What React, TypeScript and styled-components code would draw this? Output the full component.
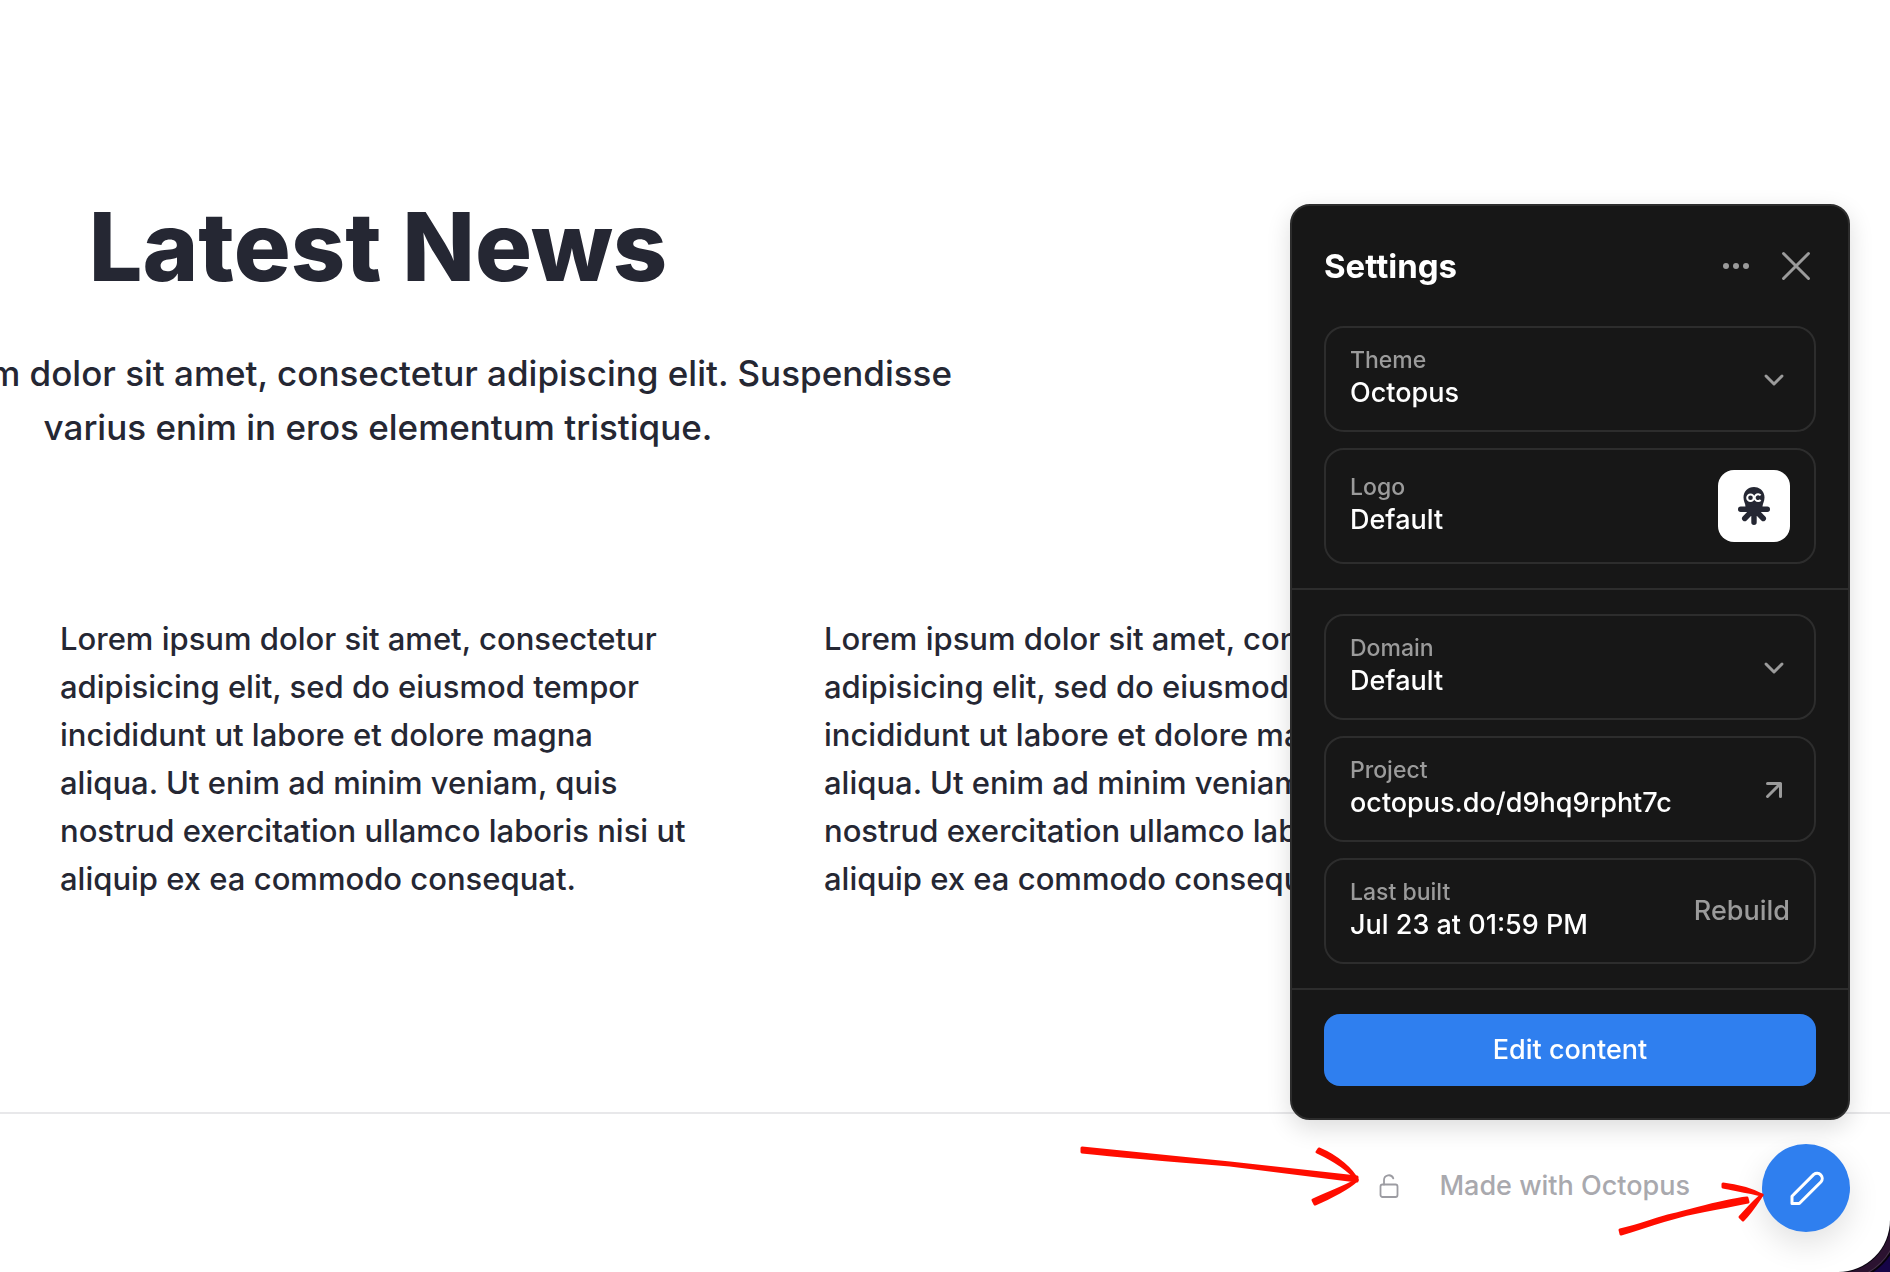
import React from "react";
import styled, { createGlobalStyle } from "styled-components";

const GlobalStyle = createGlobalStyle`
  *, *::before, *::after { box-sizing: border-box; }
  html, body, #root { height: 100%; }
  body { margin: 0; background: #160447; overflow: hidden; }
  body, button, a { font-family: Inter, "Liberation Sans", sans-serif; font-weight: 500; }
  h1, h2, p { margin: 0; }
`;

const Page = styled.div`
  position: relative;
  min-height: 100%;
  display: flex;
  flex-direction: column;
  overflow: hidden;
  background: #fff;
  color: #252733;
  border-bottom-right-radius: 52px;
  box-shadow: 0 0 0 1px #0a0510, 0 0 0 8px #2b1230, 0 0 0 9px #463349, 0 0 0 11px #07020c;
`;

const News = styled.main`
  display: grid;
  grid-template-columns: 636px 636px;
  column-gap: 128px;
  row-gap: 161px;
  padding: 191px 0 209px 60px;
`;

const Intro = styled.header`
  grid-column: 1;
  justify-self: center;
  display: flex;
  flex-direction: column;
  align-items: center;
  gap: 43px;
  text-align: center;
  white-space: nowrap;
`;

const Title = styled.h1`
  font-size: 95px;
  line-height: 112px;
  font-weight: 800;
`;

const Lead = styled.p`
  font-size: 35px;
  line-height: 54px;
`;

const Excerpt = styled.p`
  grid-row: 2;
  font-size: 31px;
  line-height: 48px;
`;

const Footer = styled.footer`
  flex: 1;
  display: flex;
  justify-content: flex-end;
  align-items: flex-start;
  gap: 40px;
  padding: 48px 200px 0 0;
  border-top: 2px solid #e8e8ea;
`;

const FooterLink = styled.a`
  display: flex;
  align-items: center;
  height: 48px;
  color: #a9a9ae;
  font-size: 27px;
  line-height: 48px;
  text-decoration: none;
`;

const Widget = styled.div`
  position: fixed;
  right: 40px;
  bottom: 40px;
  display: flex;
  flex-direction: column;
  align-items: flex-end;
  gap: 24px;
`;

const Panel = styled.section`
  width: 560px;
  border: 2px solid #2d2d2d;
  border-radius: 20px;
  background: #171717;
  box-shadow: 0 8px 24px rgba(0, 0, 0, 0.14);
`;

const PanelHeader = styled.header`
  display: flex;
  align-items: center;
  gap: 20px;
  height: 120px;
  padding: 0 32px;
`;

const PanelTitle = styled.h2`
  flex: 1;
  color: #fff;
  font-size: 33px;
  line-height: 40px;
  font-weight: 700;
`;

const IconButton = styled.button`
  display: grid;
  place-items: center;
  width: 40px;
  height: 40px;
  padding: 0;
  border: 0;
  background: none;
  color: #9b9b9b;
`;

const Group = styled.div<{ $first?: boolean }>`
  display: flex;
  flex-direction: column;
  gap: 16px;
  padding: ${(p) => (p.$first ? "0 32px 24px" : "24px 32px")};
  border-bottom: 2px solid #2d2d2d;
`;

const Card = styled.div<{ $tall?: boolean }>`
  display: flex;
  align-items: center;
  justify-content: space-between;
  width: 100%;
  height: ${(p) => (p.$tall ? 116 : 106)}px;
  padding: 0 24px;
  border: 2px solid #2d2d2d;
  border-radius: 20px;
  background: none;
  color: #9b9b9b;
  text-align: left;
  text-decoration: none;
`;

const Field = styled.span`
  display: flex;
  flex-direction: column;
`;

const Label = styled.span`
  color: #9b9b9b;
  font-size: 23px;
  line-height: 28px;
`;

const Value = styled.span`
  color: #fff;
  font-size: 27px;
  line-height: 38px;
`;

const LogoTile = styled.span`
  display: grid;
  place-items: center;
  width: 72px;
  height: 72px;
  border-radius: 16px;
  background: #fff;
`;

const TextButton = styled.button`
  padding: 0;
  border: 0;
  background: none;
  color: #9b9b9b;
  font-size: 27px;
  line-height: 38px;
`;

const Actions = styled.div`
  padding: 24px 32px 32px;
`;

const PrimaryButton = styled.button`
  width: 100%;
  height: 72px;
  border: 0;
  border-radius: 16px;
  background: #2f7fef;
  color: #fff;
  font-size: 27px;
  line-height: 38px;
`;

const EditFab = styled.button`
  display: grid;
  place-items: center;
  width: 88px;
  height: 88px;
  padding: 0;
  border: 0;
  border-radius: 50%;
  background: #2f7fef;
  color: #fff;
  box-shadow: 0 12px 32px rgba(0, 0, 0, 0.12);
`;

const Marks = styled.svg`
  position: fixed;
  right: 120px;
  bottom: 32px;
  width: 700px;
  height: 100px;
  pointer-events: none;
  overflow: visible;
`;

const Chevron = () => (
  <svg width="32" height="32" viewBox="0 0 32 32" fill="none" stroke="currentColor" strokeWidth="3" strokeLinecap="round" strokeLinejoin="round" aria-hidden="true">
    <path d="M8 13l8 8 8-8" />
  </svg>
);

const Outward = () => (
  <svg width="32" height="32" viewBox="0 0 32 32" fill="none" stroke="currentColor" strokeWidth="3" strokeLinecap="round" strokeLinejoin="round" aria-hidden="true">
    <path d="M9.500 10.500h13v13M22.500 10.500L9.500 23.500" />
  </svg>
);

const Dots = () => (
  <svg width="40" height="40" viewBox="0 0 40 40" fill="currentColor" aria-hidden="true">
    <circle cx="10" cy="20" r="3" />
    <circle cx="20" cy="20" r="3" />
    <circle cx="30" cy="20" r="3" />
  </svg>
);

const Close = () => (
  <svg width="40" height="40" viewBox="0 0 40 40" fill="none" stroke="currentColor" strokeWidth="3" strokeLinecap="round" aria-hidden="true">
    <path d="M7.500 7.500l25 25M32.500 7.500l-25 25" />
  </svg>
);

const Octopus = () => (
  <svg width="32" height="40" viewBox="0 0 32 40" fill="none" aria-hidden="true">
    <path d="M16 1C9.800 1 5.500 5.600 5.500 11.500c0 4 2 6 2 9.500l2 7h13l2-7c0-3.500 2-5.500 2-9.500C26.500 5.600 22.200 1 16 1z" fill="#252733" />
    <path d="M2.700 23.300h26.600M13 26l-6.300 6.500M19 26l6.300 6.500M16 24v12.300" stroke="#252733" strokeWidth="5.400" strokeLinecap="round" />
    <circle cx="12.500" cy="11.700" r="3.300" stroke="#fff" strokeWidth="2" />
    <path d="M22.600 9.400a3.400 3.400 0 1 0 0 4.600" stroke="#fff" strokeWidth="2" />
  </svg>
);

const Unlock = () => (
  <svg width="20" height="26" viewBox="0 0 20 26" fill="none" stroke="#9c9ca2" strokeWidth="1.800" strokeLinecap="round" strokeLinejoin="round" aria-hidden="true">
    <rect x="1.500" y="11.500" width="17" height="12.500" rx="2" />
    <path d="M5 11.500V7a4.800 4.800 0 0 1 9.300-1.600" />
  </svg>
);

const Pencil = () => (
  <svg width="40" height="40" viewBox="0 0 40 40" fill="none" stroke="currentColor" strokeWidth="3" strokeLinejoin="round" aria-hidden="true">
    <path d="M6 35.500v-7.300L27.800 6.400a5.200 5.200 0 0 1 7.300 7.300L13.300 35.500z" />
  </svg>
);

const excerpt =
  "Lorem ipsum dolor sit amet, consectetur adipisicing elit, sed do eiusmod tempor incididunt ut labore et dolore magna aliqua. Ut enim ad minim veniam, quis nostrud exercitation ullamco laboris nisi ut aliquip ex ea commodo consequat.";

type RowProps = { label: string; value: string };

const Info = ({ label, value }: RowProps) => (
  <Field>
    <Label>{label}</Label>
    <Value>{value}</Value>
  </Field>
);

export default function App() {
  return (
    <>
      <GlobalStyle />
      <Page>
        <News>
          <Intro>
            <Title>Latest News</Title>
            <Lead>
              Lorem ipsum dolor sit amet, consectetur adipiscing elit. Suspendisse
              <br />
              varius enim in eros elementum tristique.
            </Lead>
          </Intro>
          <Excerpt>{excerpt}</Excerpt>
          <Excerpt>{excerpt}</Excerpt>
        </News>
        <Footer>
          <FooterLink href="#access" aria-label="Access">
            <Unlock />
          </FooterLink>
          <FooterLink href="#octopus">Made with Octopus</FooterLink>
        </Footer>
      </Page>

      <Widget>
        <Panel>
          <PanelHeader>
            <PanelTitle>Settings</PanelTitle>
            <IconButton aria-label="More">
              <Dots />
            </IconButton>
            <IconButton aria-label="Close">
              <Close />
            </IconButton>
          </PanelHeader>
          <Group $first>
            <Card as="button">
              <Info label="Theme" value="Octopus" />
              <Chevron />
            </Card>
            <Card as="button" $tall>
              <Info label="Logo" value="Default" />
              <LogoTile>
                <Octopus />
              </LogoTile>
            </Card>
          </Group>
          <Group>
            <Card as="button">
              <Info label="Domain" value="Default" />
              <Chevron />
            </Card>
            <Card as="a" href="#project">
              <Info label="Project" value="octopus.do/d9hq9rpht7c" />
              <Outward />
            </Card>
            <Card>
              <Info label="Last built" value="Jul 23 at 01:59 PM" />
              <TextButton>Rebuild</TextButton>
            </Card>
          </Group>
          <Actions>
            <PrimaryButton>Edit content</PrimaryButton>
          </Actions>
        </Panel>
        <EditFab aria-label="Edit">
          <Pencil />
        </EditFab>
      </Widget>

      <Marks viewBox="1070 1140 700 100" fill="#ff0d00" stroke="#ff0d00" strokeWidth="3" strokeLinecap="round" strokeLinejoin="round" aria-hidden="true">
        <path d="M1082 1148C1130 1153 1180 1158 1230 1163L1357 1177V1181L1230 1165C1180 1161 1130 1157 1082 1152z" />
        <path d="M1319 1149C1338 1157 1352 1170 1357 1180C1349 1170 1336 1161 1317 1152z" />
        <path d="M1357 1180C1350 1187 1332 1197 1315 1204L1313 1200C1330 1192 1345 1187 1357 1180z" />
        <path d="M1620 1230C1640 1226 1655 1219 1672 1215C1695 1210 1720 1201 1747 1198L1748 1202C1720 1208 1700 1211 1680 1216C1660 1221 1641 1228 1621 1234z" />
        <path d="M1723 1184C1740 1186 1752 1190 1762 1195C1750 1192 1738 1190 1723 1187z" />
        <path d="M1762 1195C1756 1204 1751 1212 1743 1220L1740 1217C1747 1210 1753 1202 1762 1195z" />
      </Marks>
    </>
  );
}
